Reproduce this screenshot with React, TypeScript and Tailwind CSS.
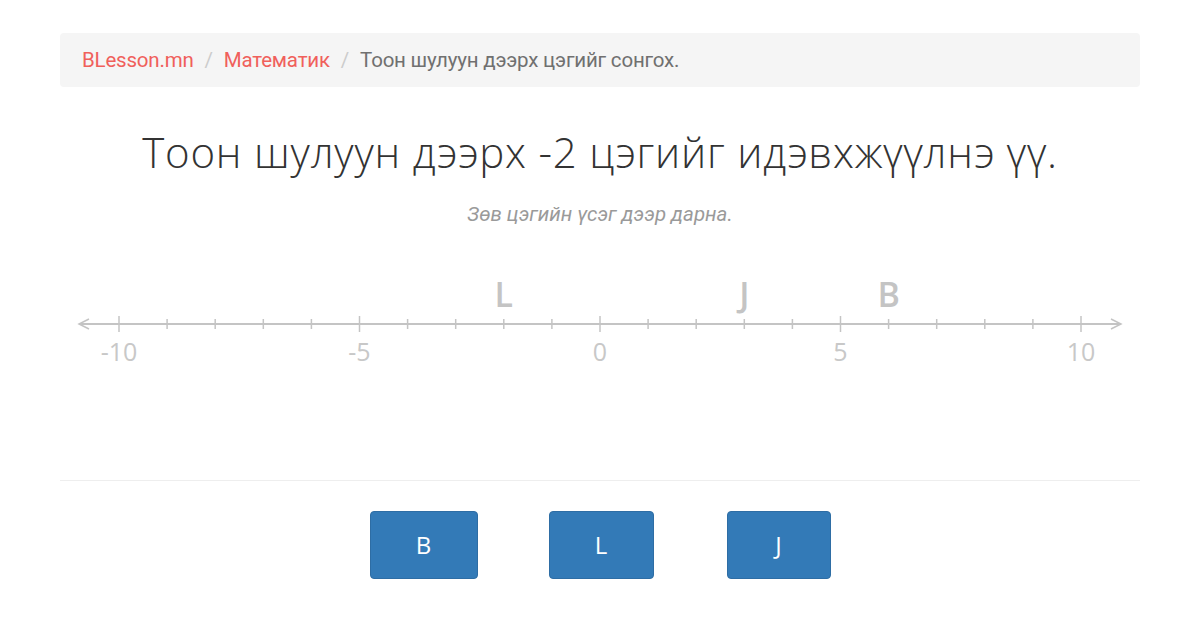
import React from "react";

const PX = (v: number) => 600 + v * 48.1;

function NumberLine() {
  const ticks = [];
  for (let i = -10; i <= 10; i++) {
    const major = i % 5 === 0;
    ticks.push(
      <line
        key={i}
        x1={PX(i)}
        x2={PX(i)}
        y1={major ? 316 : 319}
        y2={major ? 332 : 329}
        stroke="#c4c4c4"
        strokeWidth={1.5}
      />
    );
  }
  const labels = [-10, -5, 0, 5, 10];
  const pts: [string, number][] = [
    ["L", -2],
    ["J", 3],
    ["B", 6],
  ];
  return (
    <svg width={1200} height={110} viewBox="0 270 1200 110" className="block">
      <line x1={80} x2={1121} y1={324} y2={324} stroke="#c4c4c4" strokeWidth={2} />
      <polyline points="89,319 79,324 89,329" fill="none" stroke="#c4c4c4" strokeWidth={1.5} />
      <polyline points="1111,319 1121,324 1111,329" fill="none" stroke="#c4c4c4" strokeWidth={1.5} />
      {ticks}
      {labels.map((v) => (
        <text
          key={v}
          x={PX(v)}
          y={361}
          textAnchor="middle"
          fontSize={25}
          fill="#c8c8c8"
          fontFamily="'Open Sans', 'DejaVu Sans', sans-serif"
        >
          {v}
        </text>
      ))}
      {pts.map(([t, v]) => (
        <text
          key={t}
          x={PX(v)}
          y={307}
          textAnchor="middle"
          fontSize={34}
          fontWeight={600}
          fill="#c4c4c4"
          fontFamily="'Open Sans', 'DejaVu Sans', sans-serif"
        >
          {t}
        </text>
      ))}
    </svg>
  );
}

export default function App() {
  return (
    <div className="w-[1200px] h-[628px] bg-white overflow-hidden font-['Roboto',sans-serif]">
      <div className="px-[60px] pt-[33px]">
        <div className="h-[54px] bg-[#f5f5f5] rounded-[4px] flex items-center px-[22px] text-[20.5px] tracking-[-0.2px]">
          <span className="text-[#f0605b]">BLesson.mn</span>
          <span className="text-[#cccccc] px-[11px]">/</span>
          <span className="text-[#f0605b]">Математик</span>
          <span className="text-[#cccccc] px-[11px]">/</span>
          <span className="text-[#707070]">Тоон шулуун дээрх цэгийг сонгох.</span>
        </div>
      </div>
      <h1 className="mt-[40px] text-center text-[42px] leading-[50px] font-light text-[#333333] font-['Open_Sans',sans-serif] tracking-[0.8px]">
        Тоон шулуун дээрх -2 цэгийг идэвхжүүлнэ үү.
      </h1>
      <p className="mt-[24px] text-center text-[20.5px] italic text-[#9a9a9a] leading-[26px]">
        Зөв цэгийн үсэг дээр дарна.
      </p>
      <div className="mt-[43px]">
        <NumberLine />
      </div>
      <div className="mx-[60px] mt-[100px] border-t border-[#eeeeee]" />
      <div className="flex justify-center mt-[30px] font-['Open_Sans',sans-serif]">
        <button className="w-[108px] h-[68px] bg-[#337ab7] border border-[#2e6da4] rounded-[4px] text-white text-[24px]">
          B
        </button>
        <button className="ml-[71px] w-[105px] h-[68px] bg-[#337ab7] border border-[#2e6da4] rounded-[4px] text-white text-[24px]">
          L
        </button>
        <button className="ml-[73px] w-[104px] h-[68px] bg-[#337ab7] border border-[#2e6da4] rounded-[4px] text-white text-[24px]">
          J
        </button>
      </div>
    </div>
  );
}
